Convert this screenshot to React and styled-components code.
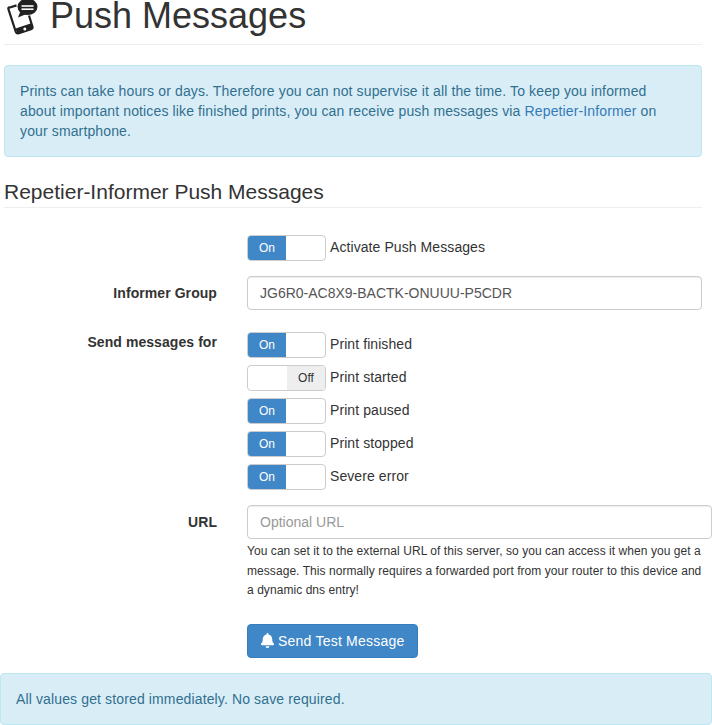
import React, { useState } from 'react'
import styled, { createGlobalStyle } from 'styled-components'
import { FaBell } from 'react-icons/fa'

const GlobalStyle = createGlobalStyle`
  html, body {
    margin: 0;
    padding: 0;
    background: #fff;
    overflow: hidden;
  }
  body {
    font-family: "Liberation Sans", Arial, sans-serif;
    font-size: 14px;
    line-height: 20px;
    color: #333;
  }
`

const Page = styled.div`
  width: 712px;
  height: 725px;
  overflow: hidden;
`

const Content = styled.div`
  padding: 0 10px 0 4px;
`

const PageHeader = styled.div`
  display: flex;
  align-items: flex-start;
  gap: 11px;
  height: 44px;
  border-bottom: 1px solid #eee;
`

const Title = styled.h1`
  margin: -4px 0 0 -1px;
  font-size: 36px;
  font-weight: 400;
  line-height: 40px;
  color: #333;
`

const Alert = styled.div`
  box-sizing: border-box;
  padding: 15px;
  background: #d9edf7;
  border: 1px solid #bce8f1;
  border-radius: 4px;
  color: #31708f;
  letter-spacing: 0.13px;
`

const IntroAlert = styled(Alert)`
  margin-top: 20px;
  height: 92px;
`

const AlertLink = styled.a`
  color: #337ab7;
  text-decoration: none;
`

const SectionTitle = styled.h3`
  margin: 24px 0 27px;
  padding-bottom: 4px;
  font-size: 21px;
  font-weight: 400;
  line-height: 22px;
  color: #333;
  border-bottom: 1px solid #eee;
`

const FormGrid = styled.div`
  display: grid;
  grid-template-columns: 213px 1fr;
  column-gap: 30px;
  align-items: start;
`

const RowLabel = styled.label`
  padding-top: ${p => p.$top}px;
  text-align: right;
  font-weight: 700;
  letter-spacing: 0.07px;
`

const Field = styled.div`
  margin-bottom: ${p => p.$gap}px;
  margin-right: ${p => p.$right || 0}px;
`

const SwitchStack = styled.div`
  display: flex;
  flex-direction: column;
  gap: 7px;
`

const SwitchRow = styled.div`
  display: flex;
  align-items: center;
  gap: 4px;
  height: 26px;
`

const SwitchBox = styled.button`
  display: flex;
  flex-direction: ${p => (p.$on ? 'row' : 'row-reverse')};
  box-sizing: border-box;
  width: 79px;
  height: 26px;
  padding: 0;
  background: #fff;
  border: 1px solid #ccc;
  border-radius: 4px;
  overflow: hidden;
  font-family: inherit;
  cursor: pointer;
`

const SwitchHandle = styled.span`
  width: 38px;
  height: 24px;
  font-size: 12px;
  line-height: 24px;
  text-align: center;
  color: ${p => (p.$on ? '#fff' : '#333')};
  background: ${p => (p.$on ? '#3f87c7' : '#eee')};
`

const SwitchText = styled.span`
  margin-top: -3px;
  letter-spacing: 0.08px;
`

const TextInput = styled.input`
  display: block;
  box-sizing: border-box;
  width: 100%;
  height: 34px;
  padding: 6px 12px;
  font-family: inherit;
  font-size: 14px;
  line-height: 20px;
  color: #555;
  background: #fff;
  border: 1px solid #ccc;
  border-radius: 4px;
  box-shadow: inset 0 1px 1px rgba(0, 0, 0, 0.075);
  &::placeholder {
    color: #999;
    opacity: 1;
  }
`

const HelpText = styled.p`
  margin: 3px 0 0;
  max-width: 460px;
  font-size: 12px;
  line-height: 19.5px;
  letter-spacing: 0.06px;
  color: #333;
`

const PrimaryButton = styled.button`
  display: inline-flex;
  justify-self: start;
  align-items: center;
  gap: 3px;
  box-sizing: border-box;
  width: 171px;
  height: 34px;
  padding: 6px 12px;
  font-family: inherit;
  font-size: 14px;
  line-height: 20px;
  letter-spacing: 0.22px;
  white-space: nowrap;
  color: #fff;
  background: #3f87c7;
  border: 1px solid #357ebd;
  border-radius: 4px;
  cursor: pointer;
`

const StoredAlert = styled(Alert)`
  height: 52px;
  margin-top: 15px;
`

const PhoneIcon = () => (
  <svg width="36" height="36" viewBox="0 0 36 36" style={{ flex: 'none' }}>
    <path d="M5 7.8 L12.5 5.4" stroke="#222" strokeWidth="2.2" fill="none" />
    <path
      d="M5.2 7.4 Q4 7.8 4.5 9.4 L11.8 31.8 Q12.6 34 14.8 33.3 L27 29.2 Q29 28.5 28.4 26.6 L25 15.5"
      stroke="#222"
      strokeWidth="2.2"
      fill="none"
    />
    <path d="M11.6 28.4 L27.2 23.2 L28.8 27.2 Q29.2 28.6 27.6 29.2 L15.5 33.4 Q13.4 34 12.8 32.2 Z" fill="#222" />
    <circle cx="20.8" cy="29" r="1.5" fill="#fff" />
    <ellipse cx="23.5" cy="6.8" rx="10" ry="8.3" fill="#222" />
    <path d="M16.5 11 L14 17.5 L22.5 14 Z" fill="#222" />
    <rect x="17.5" y="5.2" width="12" height="1.6" fill="#fff" />
    <rect x="17.5" y="8.4" width="12" height="1.6" fill="#fff" />
  </svg>
)

const Toggle = ({ initial, label }) => {
  const [on, setOn] = useState(initial)
  return (
    <SwitchRow>
      <SwitchBox $on={on} onClick={() => setOn(v => !v)}>
        <SwitchHandle $on={on}>{on ? 'On' : 'Off'}</SwitchHandle>
      </SwitchBox>
      <SwitchText>{label}</SwitchText>
    </SwitchRow>
  )
}

const App = () => (
  <Page>
    <GlobalStyle />
    <Content>
      <PageHeader>
        <PhoneIcon />
        <Title>Push Messages</Title>
      </PageHeader>
      <IntroAlert>
        Prints can take hours or days. Therefore you can not supervise it all the time. To keep you informed
        about important notices like finished prints, you can receive push messages via{' '}
        <AlertLink href="#">Repetier-Informer</AlertLink> on your smartphone.
      </IntroAlert>
      <SectionTitle>Repetier-Informer Push Messages</SectionTitle>
      <FormGrid>
        <span />
        <Field $gap={15}>
          <Toggle initial label="Activate Push Messages" />
        </Field>

        <RowLabel $top={7}>Informer Group</RowLabel>
        <Field $gap={22}>
          <TextInput defaultValue="JG6R0-AC8X9-BACTK-ONUUU-P5CDR" />
        </Field>

        <RowLabel $top={0}>Send messages for</RowLabel>
        <Field $gap={15}>
          <SwitchStack>
            <Toggle initial label="Print finished" />
            <Toggle initial={false} label="Print started" />
            <Toggle initial label="Print paused" />
            <Toggle initial label="Print stopped" />
            <Toggle initial label="Severe error" />
          </SwitchStack>
        </Field>

        <RowLabel $top={7}>URL</RowLabel>
        <Field $gap={23} $right={-10}>
          <TextInput placeholder="Optional URL" />
          <HelpText>
            You can set it to the external URL of this server, so you can access it when you get a message. This
            normally requires a forwarded port from your router to this device and a dynamic dns entry!
          </HelpText>
        </Field>

        <span />
        <PrimaryButton>
          <FaBell size={15} />
          Send Test Message
        </PrimaryButton>
      </FormGrid>
    </Content>
    <StoredAlert>All values get stored immediately. No save required.</StoredAlert>
  </Page>
)

export default App
